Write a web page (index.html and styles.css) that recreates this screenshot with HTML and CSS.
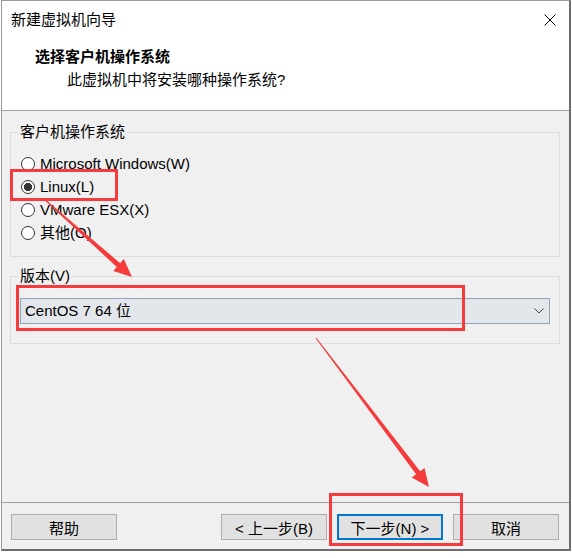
FILE: index.html
```html
<!DOCTYPE html>
<html lang="zh-CN">
<head>
    <meta charset="UTF-8">
    <title>新建虚拟机向导</title>
    <link rel="stylesheet" href="styles.css">
</head>
<body>

    <div class="window">
        <div class="header">
            <div class="titlebar">
                <span class="title">新建虚拟机向导</span>
                <svg class="close" width="12" height="12" viewBox="0 0 12 12">
                    <path d="M0.5 0.5L11.5 11.5M11.5 0.5L0.5 11.5" stroke="#000" stroke-width="1" fill="none"/>
                </svg>
            </div>
            <h1 class="heading">选择客户机操作系统</h1>
            <p class="subheading">此虚拟机中将安装哪种操作系统?</p>
        </div>

        <div class="content">
            <fieldset class="group group-os">
                <legend>客户机操作系统</legend>
                <label class="option"><input type="radio" name="os"><span>Microsoft Windows(W)</span></label>
                <label class="option"><input type="radio" name="os" checked><span>Linux(L)</span></label>
                <label class="option"><input type="radio" name="os"><span>VMware ESX(X)</span></label>
                <label class="option"><input type="radio" name="os"><span>其他(O)</span></label>
            </fieldset>

            <fieldset class="group group-version">
                <legend>版本(V)</legend>
                <div class="combo">
                    <span>CentOS 7 64 位</span>
                    <svg width="10" height="6" viewBox="0 0 10 6">
                        <path d="M0.5 0.5L5 5L9.5 0.5" stroke="#444" stroke-width="1" fill="none"/>
                    </svg>
                </div>
            </fieldset>
        </div>

        <div class="footer">
            <button class="btn">帮助</button>
            <span class="spacer"></span>
            <button class="btn">&lt; 上一步(B)</button>
            <button class="btn btn-default">下一步(N) &gt;</button>
            <button class="btn">取消</button>
        </div>
    </div>

    <!-- red annotations drawn over the dialog -->
    <svg class="marks" width="572" height="558" viewBox="0 0 572 558">
        <g fill="none" stroke="#f53b3b" stroke-width="3">
            <rect x="11.5" y="170.5" width="105" height="29"/>
            <rect x="17.5" y="286.5" width="446" height="43"/>
            <rect x="330.5" y="494.5" width="131" height="50"/>
        </g>
        <g fill="#f53b3b">
            <polygon points="44.3,198.6 120.2,263.2 123.8,259.1 132,277 113.2,271.1 116.8,267.0 43.7,199.4"/>
            <polygon points="316.4,337.7 420.1,471.2 424.5,467.9 429,487 411.7,477.5 416.1,474.2 315.6,338.3"/>
        </g>
    </svg>

</body>
</html>
```

FILE: styles.css
```css
body {
    margin: 0;
    position: relative;
    background-color: #fff;
    font-family: "Liberation Sans", "Noto Sans CJK SC", sans-serif;
    font-size: 15px;
    line-height: 20px;
    color: #000;
}
.window {
    width: 570px;
    margin-left: 1px;
    box-sizing: border-box;
    border: 1px solid #9a9a9a;
    border-right: 2px solid #6d6d6d;
    border-bottom: 2px solid #6d6d6d;
}
.header {
    height: 110px;
    box-sizing: border-box;
    background-color: #fff;
    border-bottom: 1px solid #a0a0a0;
}
.titlebar {
    height: 38px;
    padding: 0 13px 0 9px;
    display: flex;
    justify-content: space-between;
    align-items: center;
}
.heading {
    margin: 8px 0 0 33px;
    font-size: 15px;
    line-height: 20px;
    font-weight: bold;
}
.subheading {
    margin: 3px 0 0 65px;
}
.content {
    height: 392px;
    box-sizing: border-box;
    padding-top: 11px;
    background-color: #f0f0f0;
    border-bottom: 1px solid #a0a0a0;
}
.group {
    margin: 0 9px 0 8px;
    padding-left: 0;
    padding-right: 0;
    border: 1px solid #dcdcdc;
    min-width: 0;
}
.group legend {
    margin-left: 7px;
    padding: 0 2px;
    line-height: 20px;
}
.group-os {
    padding-top: 10px;
    padding-bottom: 12px;
}
.group-version {
    margin-top: 9px;
    padding-top: 12px;
    padding-bottom: 19px;
}
.option {
    height: 23px;
    margin-left: 10px;
    display: flex;
    align-items: center;
    gap: 5px;
}
.option input {
    -webkit-appearance: none;
    appearance: none;
    flex: none;
    width: 14px;
    height: 14px;
    margin: 0;
    border: 1px solid #333;
    border-radius: 50%;
    background-color: #fff;
}
.option input:checked {
    background: radial-gradient(circle, #333 0 3.8px, #fff 4.4px);
}
.combo {
    height: 26px;
    margin: 0 9px;
    box-sizing: border-box;
    padding: 0 5px 0 4px;
    display: flex;
    justify-content: space-between;
    align-items: center;
    background-color: #e3e6ea;
    border: 1px solid #8fa5bb;
}
.footer {
    height: 46px;
    box-sizing: border-box;
    padding: 11px 10px 0 9px;
    display: flex;
    align-items: flex-start;
    gap: 10px;
    background-color: #f0f0f0;
}
.spacer {
    flex: 1;
}
.btn {
    width: 106px;
    height: 26px;
    box-sizing: border-box;
    padding: 0;
    font-family: inherit;
    font-size: 15px;
    color: #000;
    background-color: #e1e1e1;
    border: 1px solid #adadad;
}
.btn-default {
    border: 2px solid #0078d7;
}
.marks {
    position: absolute;
    top: 0;
    left: 0;
    pointer-events: none;
}
```
